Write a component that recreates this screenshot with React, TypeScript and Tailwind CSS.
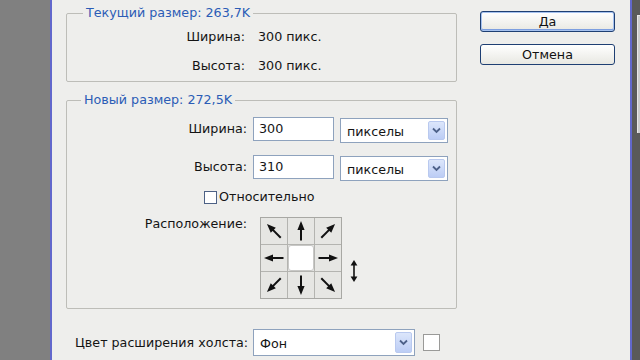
import React from 'react'

const FONT = "font-['DejaVu_Sans','Liberation_Sans',sans-serif]"

// arrow direction -> rotation in degrees (null = centre cell)
const ANCHOR: (number | null)[] = [-45, 0, 45, -90, null, 90, -135, 180, 135]

function Arrow({ angle }: { angle: number }) {
  return (
    <svg width="24" height="24" viewBox="0 0 24 24">
      <g transform={`rotate(${angle} 12 12)`}>
        <line x1="12" y1="21.5" x2="12" y2="9" stroke="#111" strokeWidth="2" />
        <polygon points="12,2 8.4,11 15.6,11" fill="#111" />
      </g>
    </svg>
  )
}

function Chevron() {
  return (
    <div className="flex h-full w-[17px] items-center justify-center rounded-[2px] border border-[#b9c9ef] bg-gradient-to-b from-[#dce6fb] to-[#bccdf5]">
      <svg width="9" height="7" viewBox="0 0 9 7">
        <path d="M1 1.5 L4.5 5 L8 1.5" fill="none" stroke="#4d6189" strokeWidth="1.8" />
      </svg>
    </div>
  )
}

function Select({ value, className }: { value: string; className: string }) {
  return (
    <div className={`flex items-center border border-[#8ea2bd] bg-white pl-[6px] pr-[2px] py-[2px] ${className}`}>
      <span className="flex-1 pt-[2px]">{value}</span>
      <Chevron />
    </div>
  )
}

function Button({ label, primary }: { label: string; primary?: boolean }) {
  return (
    <button
      className={`h-[21px] w-[135px] rounded-[3px] border border-[#1e3f73] bg-gradient-to-b from-white to-[#e8e8e2] leading-[19px] text-[#111] ${
        primary ? 'shadow-[inset_0_0_0_1px_#a6c2ef,inset_0_-1px_0_1px_#7d9fe0]' : ''
      }`}
    >
      {label}
    </button>
  )
}

export default function App() {
  return (
    <div className={`flex h-[360px] w-[640px] overflow-hidden bg-[#808080] text-[12.7px] text-[#141414] ${FONT}`}>
      <div className="w-[50px] shrink-0" />

      {/* dialog */}
      <div className="flex w-[582px] shrink-0 border-x-2 border-[#6268cc] bg-[#eeeeec] pl-[14px] pt-[5px]">
        <div className="flex w-[391px] flex-col">
          <fieldset className="rounded-[2px] border border-[#bdbdb8] pb-[7px]">
            <legend className="ml-[16px] px-[3px] leading-[16px] text-[#2b5cb6]">Текущий размер: 263,7K</legend>
            <div className="grid grid-cols-[178px_auto] gap-x-[13px] gap-y-[13px] pt-[8px] leading-[16px]">
              <span className="text-right">Ширина:</span>
              <span>300 пикс.</span>
              <span className="text-right">Высота:</span>
              <span>300 пикс.</span>
            </div>
          </fieldset>

          <fieldset className="mt-[10px] rounded-[2px] border border-[#bdbdb8] pb-[9px]">
            <legend className="ml-[14px] px-[3px] leading-[16px] text-[#2b5cb6]">Новый размер: 272,5K</legend>
            <div className="flex flex-col pt-[9px]">
              <div className="grid grid-cols-[180px_81px_auto] items-start gap-x-[6px] gap-y-[12px]">
                <span className="pt-[4px] text-right leading-[16px]">Ширина:</span>
                <div className="h-[24px] border border-[#8ea2bd] bg-white pl-[5px] pt-[3px] leading-[16px]">300</div>
                <Select value="пикселы" className="mt-[1px] h-[25px] w-[108px]" />
                <span className="pt-[4px] text-right leading-[16px]">Высота:</span>
                <div className="h-[24px] border border-[#8ea2bd] bg-white pl-[5px] pt-[3px] leading-[16px]">310</div>
                <Select value="пикселы" className="mt-[1px] h-[25px] w-[108px]" />
              </div>

              <div className="mt-[8px] flex items-center pl-[137px] leading-[16px]">
                <span className="h-[13px] w-[13px] border border-[#4d6185] bg-white" />
                <span className="ml-[2px]">Относительно</span>
              </div>

              <div className="mt-[12px] flex items-start">
                <span className="w-[180px] text-right leading-[14px]">Расположение:</span>
                <div className="ml-[13px] grid grid-cols-3 gap-px border border-[#a8a8a4] bg-[#b4b4b0]">
                  {ANCHOR.map((a, i) =>
                    a === null ? (
                      <div key={i} className="flex h-[26px] w-[26px] items-center justify-center bg-[#e4e4e2]">
                        <div className="h-[26px] w-[26px] rounded-[3px] border border-[#c8c8c6] bg-white" />
                      </div>
                    ) : (
                      <div key={i} className="flex h-[26px] w-[26px] items-center justify-center bg-[#e6e6e3]">
                        <Arrow angle={a} />
                      </div>
                    )
                  )}
                </div>
                <svg className="ml-[7px] mt-[42px]" width="10" height="24" viewBox="0 0 10 24">
                  <line x1="5" y1="4" x2="5" y2="20" stroke="#111" strokeWidth="1.6" />
                  <polygon points="5,1 1.6,6.5 8.4,6.5" fill="#111" />
                  <polygon points="5,23 1.6,17.5 8.4,17.5" fill="#111" />
                </svg>
              </div>
            </div>
          </fieldset>

          <div className="mt-[20px] flex items-center">
            <span className="w-[187px] whitespace-nowrap pl-[9px] leading-[16px]">Цвет расширения холста:</span>
            <Select value="Фон" className="h-[27px] w-[162px]" />
            <span className="ml-[8px] h-[17px] w-[17px] border border-[#9a9a98] bg-white" />
          </div>
        </div>

        <div className="ml-[23px] flex flex-col gap-[12px] pt-[6px]">
          <Button label="Да" primary />
          <Button label="Отмена" />
        </div>
      </div>

      {/* background window edge */}
      <div className="flex-1 bg-[#5a5a5a] pl-[5px] pt-[15px]">
        <div className="h-[118px] border-l border-t border-[#e8e8e8] bg-[#cdcdcd]" />
      </div>
    </div>
  )
}
